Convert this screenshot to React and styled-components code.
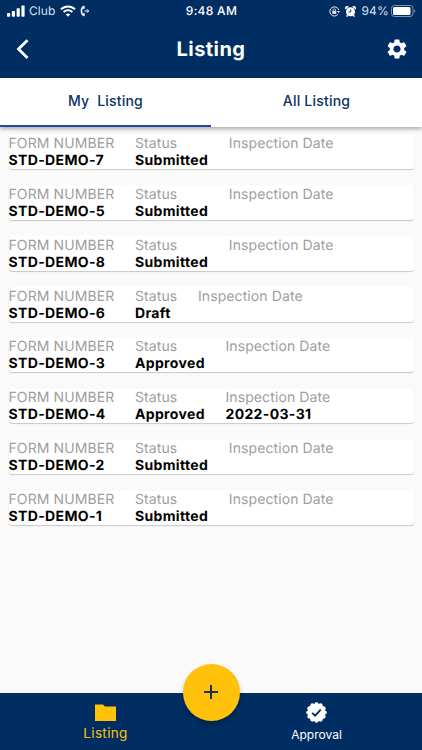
import styled, { createGlobalStyle } from "styled-components";
import { MdAdd, MdSettings } from "react-icons/md";

const Navy = "#002d62";
const Amber = "#ffc10a";
const White = "#ffffff";

const GlobalStyle = createGlobalStyle`
  * {
    box-sizing: border-box;
  }

  body {
    margin: 0;
    font-family: Inter, "Liberation Sans", sans-serif;
    text-rendering: geometricPrecision;
  }

  button {
    padding: 0;
    border: 0;
    background: none;
    font-family: inherit;
  }

  svg {
    display: block;
    flex-shrink: 0;
  }
`;

const Screen = styled.div`
  display: flex;
  flex-direction: column;
  width: 422px;
  height: 750px;
  overflow: hidden;
  background-color: #fafafa;
`;

const Header = styled.header`
  flex-shrink: 0;
  height: 77.5px;
  background-color: ${Navy};
  color: ${White};
`;

const StatusBar = styled.div`
  display: grid;
  grid-template-columns: 1fr auto 1fr;
  align-items: center;
  height: 22px;
  padding: 0 6px 0 7px;
  font-size: 12px;
  line-height: 22px;
`;

const StatusGroup = styled.div`
  display: flex;
  align-items: center;
  justify-content: ${({ $end }) => ($end ? "flex-end" : "flex-start")};
  gap: ${({ $end }) => ($end ? "5px" : "4px")};
  color: #d9e2ec;
`;

const Carrier = styled.span`
  letter-spacing: 0.1px;
`;

const Clock = styled.div`
  font-weight: 500;
  letter-spacing: 0.3px;
`;

const Percent = styled.span`
  margin-right: -3px;
  letter-spacing: 0.2px;
`;

const TitleBar = styled.div`
  display: grid;
  grid-template-columns: 48px 1fr 48px;
  align-items: center;
  height: 54px;
`;

const IconButton = styled.button`
  display: flex;
  padding-left: 11px;
  color: ${White};
`;

const Title = styled.h1`
  margin: 0;
  font-size: 20px;
  font-weight: 700;
  line-height: 26px;
  letter-spacing: 0.45px;
  text-align: center;
`;

const TabBar = styled.nav`
  position: relative;
  flex-shrink: 0;
  display: flex;
  height: 49px;
  background-color: ${White};
  box-shadow: 0 2px 4px rgba(0, 0, 0, 0.32);
`;

const Tab = styled.button`
  flex: 1;
  height: 49px;
  padding-bottom: 1px;
  border-bottom: 2px solid
    ${({ $active }) => ($active ? "#2448a0" : "transparent")};
  color: #0b3264;
  font-size: 14px;
  font-weight: 500;
  letter-spacing: 0.2px;
  white-space: pre;
`;

const List = styled.main`
  flex: 1;
  display: flex;
  flex-direction: column;
  gap: 16.4px;
  padding: 7.9px 8.5px 0;
`;

const Card = styled.article`
  display: flex;
  gap: 20.6px;
  height: 34.5px;
  background-color: ${White};
  border-radius: 3px;
  box-shadow: 0 1px 1px rgba(0, 0, 0, 0.2);
`;

const Label = styled.div`
  padding-top: 0.5px;
  color: #9e9e9e;
  font-size: 14px;
  line-height: 17px;
  letter-spacing: 0.1px;
`;

const Value = styled.div`
  color: #000;
  font-size: 14px;
  font-weight: 650;
  line-height: 17px;
  letter-spacing: 0.35px;
`;

const BottomBar = styled.nav`
  position: relative;
  flex-shrink: 0;
  display: flex;
  height: 57.5px;
  background-color: ${Navy};
`;

const BottomItem = styled.button`
  flex: 1;
  display: flex;
  flex-direction: column;
  align-items: center;
  padding-top: 7px;
  color: ${({ $active }) => ($active ? Amber : White)};
  font-size: ${({ $active }) => ($active ? "13.5px" : "12px")};
  letter-spacing: ${({ $active }) => ($active ? "0.35px" : "0")};
  line-height: ${({ $active }) => ($active ? "17px" : "20px")};
`;

const AddButton = styled.button`
  position: absolute;
  top: -29px;
  left: calc(50% - 28.5px);
  display: flex;
  align-items: center;
  justify-content: center;
  width: 57px;
  height: 57px;
  border-radius: 50%;
  background-color: ${Amber};
  color: #173246;
  box-shadow: 0 3px 5px rgba(0, 0, 0, 0.25);
`;

const SignalIcon = () => (
  <svg width="18" height="12" viewBox="0 0 18 12" fill="#fff">
    <rect x="0" y="8" width="3.2" height="3.7" rx="0.8" />
    <rect x="4.8" y="6" width="3.2" height="5.7" rx="0.8" />
    <rect x="9.6" y="3.3" width="3.2" height="8.4" rx="0.8" />
    <rect x="14.4" y="0.5" width="3.2" height="11.2" rx="0.8" />
  </svg>
);

const WifiIcon = () => (
  <svg width="16" height="12" viewBox="0 0 16 12" fill="none" stroke="#fff">
    <path d="M1 4.3C5 .4 11 .4 15 4.3" strokeWidth="2" />
    <path d="M3.6 7.1c2.6-2.4 6.2-2.4 8.8 0" strokeWidth="2" />
    <path d="M8 11.7 5.7 9.3c1.3-1.2 3.3-1.2 4.6 0z" fill="#fff" stroke="none" />
  </svg>
);

const CallForwardIcon = () => (
  <svg width="10" height="12" viewBox="0 0 10 12" fill="none" stroke="#fff">
    <path d="M4.4 1.3C.4 2.8.4 9.2 4.4 10.7" strokeWidth="1.5" />
    <path d="M3.2 1.6l1.1 2M3.2 10.4l1.1-2" strokeWidth="1.9" />
    <path d="M4.5 6h4M6.9 4.2 8.7 6 6.9 7.8" strokeWidth="1" />
  </svg>
);

const RotationLockIcon = () => (
  <svg width="11" height="11" viewBox="0 0 11 11" fill="none" stroke="#e5ebf2">
    <path d="M9.8 4A4.6 4.6 0 1 0 9.2 8.1" strokeWidth="1" />
    <path d="M8 5h3L9.7 7z" fill="#e5ebf2" stroke="none" />
    <rect x="3.3" y="4.9" width="4" height="3" fill="#e5ebf2" stroke="none" />
    <path d="M4.1 5V4.1a1.2 1.2 0 0 1 2.4 0V5" strokeWidth="0.8" />
  </svg>
);

const AlarmIcon = () => (
  <svg width="11" height="11" viewBox="0 0 11 11">
    <g fill="#fff">
      <circle cx="5.5" cy="5.8" r="4.5" />
      <path d="M.6 3.5A2 2 0 0 1 3.7.7zM10.4 3.5A2 2 0 0 0 7.3.7zM1.2 10.9l.5-2.4 2 1.5zM9.8 10.9l-.5-2.4-2 1.5z" />
    </g>
    <path d="M5.7 3.3V6H3.5" fill="none" stroke={Navy} strokeWidth="0.9" />
  </svg>
);

const BatteryIcon = () => (
  <svg width="25" height="12" viewBox="0 0 25 12">
    <rect
      x="0.5"
      y="0.5"
      width="21.5"
      height="11"
      rx="3"
      fill="none"
      stroke="#8295ae"
    />
    <rect x="2" y="2" width="17.5" height="8" rx="1.5" fill="#fff" />
    <path d="M23.3 4.2c1.4.5 1.4 3.1 0 3.6z" fill="#8295ae" />
  </svg>
);

const BackIcon = () => (
  <svg width="24" height="24" viewBox="0 0 24 24" fill="none">
    <path d="m16.5 3.2-9 8.9 9 8.9" stroke="#fff" strokeWidth="2.8" />
  </svg>
);

const FolderIcon = () => (
  <svg width="25" height="25" viewBox="0 0 25 25" fill={Amber}>
    <path d="M2 4.5h8l1.8 2H23V21H2z" />
  </svg>
);

const BUMPS = 12;

const SealIcon = () => (
  <svg width="25" height="25" viewBox="0 0 25 25">
    <circle cx="12.5" cy="12.5" r="8.9" fill="#fff" />
    {Array.from({ length: BUMPS }, (_, i) => {
      const angle = (i * 2 * Math.PI) / BUMPS;
      return (
        <circle
          key={"bump" + i}
          cx={12.5 + 8.2 * Math.cos(angle)}
          cy={12.5 + 8.2 * Math.sin(angle)}
          r="2.1"
          fill="#fff"
        />
      );
    })}
    <path
      d="m8.2 12.8 2.9 2.9 5.6-6.1"
      fill="none"
      stroke={Navy}
      strokeWidth="1.9"
    />
  </svg>
);

const forms = [
  { number: "STD-DEMO-7", status: "Submitted" },
  { number: "STD-DEMO-5", status: "Submitted" },
  { number: "STD-DEMO-8", status: "Submitted" },
  { number: "STD-DEMO-6", status: "Draft" },
  { number: "STD-DEMO-3", status: "Approved" },
  { number: "STD-DEMO-4", status: "Approved", date: "2022-03-31" },
  { number: "STD-DEMO-2", status: "Submitted" },
  { number: "STD-DEMO-1", status: "Submitted" },
];

const Field = ({ label, value }) => (
  <div>
    <Label>{label}</Label>
    <Value>{value}</Value>
  </div>
);

const App = () => {
  return (
    <Screen>
      <GlobalStyle />
      <Header>
        <StatusBar>
          <StatusGroup>
            <SignalIcon />
            <Carrier>Club</Carrier>
            <WifiIcon />
            <CallForwardIcon />
          </StatusGroup>
          <Clock>9:48 AM</Clock>
          <StatusGroup $end>
            <RotationLockIcon />
            <AlarmIcon />
            <Percent>94%</Percent>
            <BatteryIcon />
          </StatusGroup>
        </StatusBar>
        <TitleBar>
          <IconButton aria-label="Back">
            <BackIcon />
          </IconButton>
          <Title>Listing</Title>
          <IconButton aria-label="Settings">
            <MdSettings size={24} />
          </IconButton>
        </TitleBar>
      </Header>
      <TabBar>
        <Tab $active>{"My  Listing"}</Tab>
        <Tab>All Listing</Tab>
      </TabBar>
      <List>
        {forms.map((form) => (
          <Card key={form.number}>
            <Field label="FORM NUMBER" value={form.number} />
            <Field label="Status" value={form.status} />
            <Field label="Inspection Date" value={form.date} />
          </Card>
        ))}
      </List>
      <BottomBar>
        <BottomItem $active>
          <FolderIcon />
          Listing
        </BottomItem>
        <BottomItem>
          <SealIcon />
          Approval
        </BottomItem>
        <AddButton aria-label="Add">
          <MdAdd size={24} />
        </AddButton>
      </BottomBar>
    </Screen>
  );
};

export default App;
